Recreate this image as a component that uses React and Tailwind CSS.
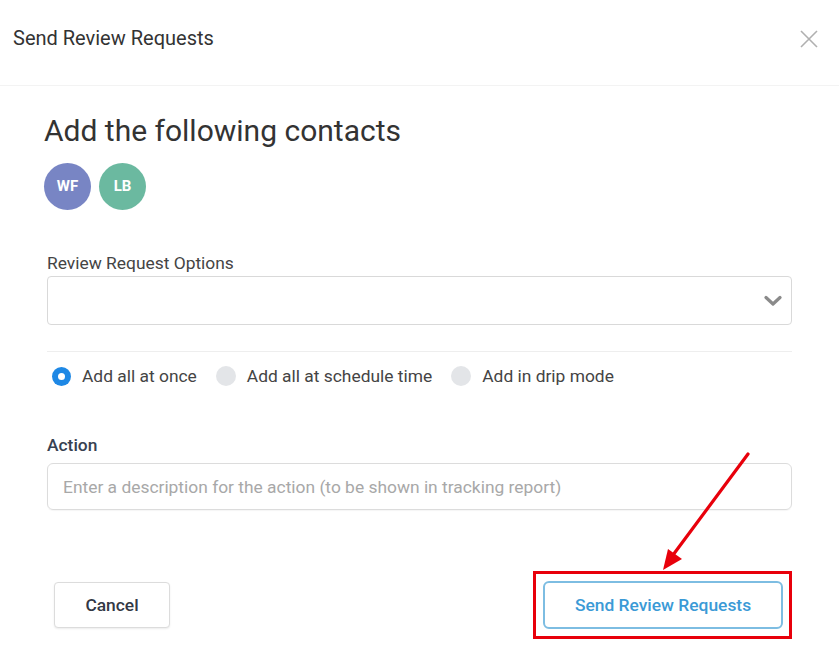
import React from 'react'

function Radio({ checked, label }) {
  return (
    <label className="flex items-center gap-[11px]">
      {checked ? (
        <span className="w-[19px] h-[19px] rounded-full bg-[#1e88e5] flex items-center justify-center">
          <span className="w-[7px] h-[7px] rounded-full bg-white"></span>
        </span>
      ) : (
        <span className="w-[20px] h-[20px] rounded-full bg-[#e3e5e8]"></span>
      )}
      <span className="text-[17.4px] leading-[22px] text-[#444]">{label}</span>
    </label>
  )
}

export default function App() {
  return (
    <div className="relative w-[839px] h-[671px] bg-white overflow-hidden" style={{ fontFamily: 'Roboto, "Open Sans", sans-serif' }}>

      {/* header */}
      <div className="h-[86px] flex justify-between pl-[13px] pr-[21px] border-b border-[#f3f3f3]">
        <h1 className="pt-[25px] text-[20px] leading-[26px] text-[#333] font-normal">Send Review Requests</h1>
        <button className="mt-[30px] w-[18px] h-[18px] text-[#b0b0b0]">
          <svg viewBox="0 0 18 18" width="18" height="18" fill="none" stroke="currentColor" strokeWidth="1.6">
            <path d="M1 1 L17 17 M17 1 L1 17" />
          </svg>
        </button>
      </div>

      {/* body */}
      <div className="pl-[44px] pr-[47px]">
        <h2 className="mt-[27px] text-[30px] leading-[36px] text-[#333] font-normal">Add the following contacts</h2>

        <div className="mt-[14px] flex gap-[8px]">
          <div className="w-[47px] h-[47px] rounded-full bg-[#7885c4] flex items-center justify-center text-white text-[15px] font-bold">WF</div>
          <div className="w-[47px] h-[47px] rounded-full bg-[#6bb9a0] flex items-center justify-center text-white text-[15px] font-bold">LB</div>
        </div>

        <div className="ml-[3px]">
          <div className="mt-[42px] text-[17.4px] leading-[22px] text-[#444]">Review Request Options</div>
          <div className="mt-[2px] h-[49px] rounded-[4px] border border-[#d9d9d9] flex items-center justify-end pr-[9px]">
            <svg viewBox="0 0 18 12" width="18" height="12" fill="none" stroke="#8a8a8a" strokeWidth="3.2" strokeLinecap="round" strokeLinejoin="round">
              <path d="M2 2.5 L9 9 L16 2.5" />
            </svg>
          </div>

          <div className="mt-[26px] border-t border-[#eeeeee]"></div>

          <div className="mt-[13px] flex items-center gap-[19px] pl-[5px]">
            <Radio checked label="Add all at once" />
            <Radio label="Add all at schedule time" />
            <Radio label="Add in drip mode" />
          </div>

          <div className="mt-[47px] text-[17.4px] leading-[22px] text-[#374151] font-medium">Action</div>
          <input
            className="mt-[7px] w-full h-[47px] rounded-[6px] border border-[#dcdcdc] px-[15px] text-[17.4px] text-[#333] placeholder:text-[#a8a8a8] outline-none shadow-[0_1px_1px_rgba(0,0,0,0.04)]"
            placeholder="Enter a description for the action (to be shown in tracking report)"
          />

          {/* footer buttons */}
          <div className="mt-[71px] flex items-center justify-between pl-[7px] pr-[9px]">
            <button className="w-[116px] h-[46px] rounded-[4px] border border-[#dcdcdc] bg-white text-[17.4px] font-medium text-[#333845] shadow-[0_1px_2px_rgba(0,0,0,0.08)]">
              Cancel
            </button>
            <div className="relative">
              <button className="w-[240px] h-[48px] rounded-[6px] border-2 border-[#7dbde2] bg-white text-[17.4px] font-medium text-[#3b9ad6]">
                Send Review Requests
              </button>
              {/* annotation box */}
              <div className="absolute -left-[10px] -top-[10px] -right-[9px] -bottom-[10px] border-[3px] border-[#e8000b] pointer-events-none"></div>
            </div>
          </div>
        </div>
      </div>

      {/* annotation arrow */}
      <svg className="absolute inset-0 pointer-events-none" width="839" height="671" viewBox="0 0 839 671">
        <line x1="748" y1="454" x2="673" y2="555" stroke="#e8000b" strokeWidth="3.2" strokeLinecap="round" />
        <polygon points="663,570 668,549 682,559" fill="#e8000b" />
      </svg>
    </div>
  )
}
